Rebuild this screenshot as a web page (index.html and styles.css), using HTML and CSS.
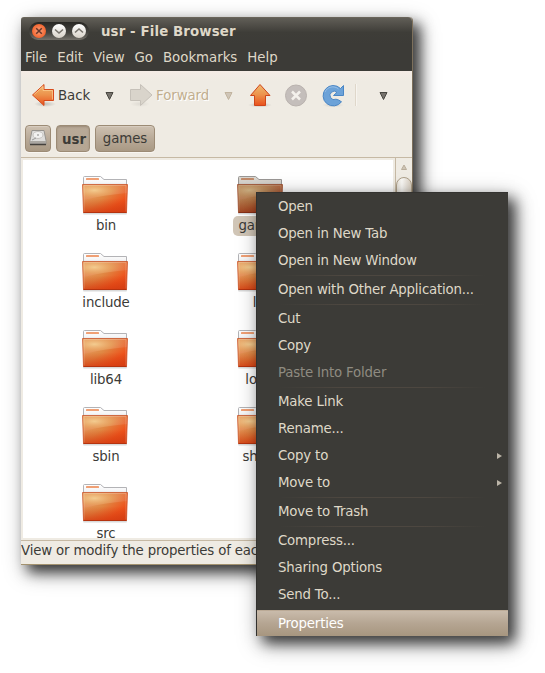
FILE: index.html
```
<!DOCTYPE html>
<html lang="en">
<head>
<meta charset="utf-8">
<title>usr - File Browser</title>
<link rel="stylesheet" href="styles.css">
</head>
<body>
<svg class="defs" aria-hidden="true">
  <defs>
    <linearGradient id="orange" x1="0" y1="0" x2="0" y2="1"><stop offset="0" stop-color="#f0ba70"/><stop offset=".5" stop-color="#ec914b"/><stop offset="1" stop-color="#e9501c"/></linearGradient>
    <linearGradient id="body" x1="0" y1="0" x2="1" y2=".8"><stop offset="0" stop-color="#e8a36c"/><stop offset=".5" stop-color="#e08844"/><stop offset=".82" stop-color="#ed531c"/><stop offset="1" stop-color="#e04818"/></linearGradient>
    <linearGradient id="foot" x1="0" y1="0" x2="0" y2="1"><stop offset=".5" stop-color="#d34010" stop-opacity="0"/><stop offset="1" stop-color="#d33a10" stop-opacity=".75"/></linearGradient>
    <radialGradient id="glow" cx=".26" cy=".35" r=".7"><stop offset="0" stop-color="#f3cc90"/><stop offset=".55" stop-color="#eaa868" stop-opacity=".7"/><stop offset="1" stop-color="#ec8560" stop-opacity=".35"/></radialGradient>
    <linearGradient id="paper" x1="0" y1="0" x2="0" y2="1"><stop offset="0" stop-color="#fff"/><stop offset=".6" stop-color="#f5f5f6"/><stop offset="1" stop-color="#c9c9cd"/></linearGradient>
    <radialGradient id="shade"><stop offset="0" stop-color="#000" stop-opacity=".2"/><stop offset="1" stop-color="#000" stop-opacity="0"/></radialGradient>
    <symbol id="folder" viewBox="0 0 48 40">
      <rect x="2" y="36.500" width="44" height="2" rx="1" fill="#000" opacity=".15"/>
      <path d="M2.500 11V1.500Q2.500.5 3.500.5H19.500l3.500 3H45.500V11z" fill="url(#paper)" stroke="#b3b3b6"/>
      <rect x="5" y="2" width="13" height="2" rx=".6" fill="#f0a075"/>
      <path d="M1.500 8.500H46.500L45.500 36.500H2.500z" fill="url(#body)"/>
      <path d="M1.500 8.500H46.500L45.500 36.500H2.500z" fill="url(#foot)"/>
      <path d="M2 9H46V17Q23 19 2.400 24z" fill="url(#glow)"/>
      <path d="M3 35.500V9.500H45V35.500" fill="none" stroke="#fff" stroke-opacity=".2"/>
      <path d="M1.500 8.500H46.500L45.500 36.500H2.500z" fill="none" stroke="#c8481c" stroke-opacity=".7"/>
      <path d="M2.500 36.500H45.500" stroke="#b5330f"/>
    </symbol>
  </defs>
</svg>

<main class="window">
  <header class="titlebar">
    <div class="controls">
      <svg width="60" height="18" viewBox="0 0 60 18">
        <defs><linearGradient id="wb" x1="0" y1="0" x2="0" y2="1"><stop offset="0" stop-color="#fff"/><stop offset="1" stop-color="#d8d2c8"/></linearGradient><radialGradient id="cb"><stop offset="0" stop-color="#f9a27c"/><stop offset="1" stop-color="#f3642e"/></radialGradient></defs>
        <circle cx="10" cy="9" r="7" fill="url(#cb)"/><circle cx="30" cy="9" r="7" fill="url(#wb)"/><circle cx="50" cy="9" r="7" fill="url(#wb)"/>
        <path d="M7.200 6.200l5.600 5.600m0-5.600l-5.600 5.600" stroke="#653629" stroke-width="1.500"/>
        <path d="M26 7.500l4 3.500 4-3.500M46 10.500l4-3.500 4 3.500" fill="none" stroke="#77736c" stroke-width="1.600"/>
      </svg>
    </div>
    <h1>usr - File Browser</h1>
  </header>
  <nav class="menubar"><span>File</span><span>Edit</span><span>View</span><span>Go</span><span>Bookmarks</span><span>Help</span></nav>

  <section class="toolbar">
    <svg width="391" height="49" viewBox="0 1 391 49">
      <ellipse cx="24" cy="34" rx="11" ry="3" fill="url(#shade)"/>
      <path d="M11.500 25L23 14.500v5h9.500v11H23v5z" fill="url(#orange)" stroke="#d84a1b" stroke-linejoin="round"/>
      <path d="M13.200 24.500L22 16.500V20.500h9.500v9" fill="none" stroke="#ffd49a" stroke-opacity=".65"/>
      <path d="M85 22.500H92L88.500 29.500z" fill="#77736d" stroke="#494741"/>
      <ellipse cx="119" cy="34" rx="10" ry="3" fill="url(#shade)" opacity=".35"/>
      <path d="M131 25L119.500 14.500v5h-10v11h10v5z" fill="#d9d4cb" stroke="#c6c1b9" stroke-linejoin="round"/>
      <path d="M204 22.500H211L207.500 29.500z" fill="#cfc5b7" stroke="#c2b49f"/>
      <ellipse cx="239" cy="35" rx="12" ry="2.500" fill="url(#shade)"/>
      <path d="M239 14.500L249 25.500H244.500V35.500H233.500V25.500H229.500z" fill="url(#orange)" stroke="#cf451a" stroke-linejoin="round"/>
      <circle cx="275" cy="25.500" r="10.500" fill="#c4bebb" stroke="#b9b2ae"/>
      <path d="M271 21.500l8 8m0-8l-8 8" stroke="#f4f1ec" stroke-width="2.500"/>
      <ellipse cx="312" cy="35" rx="11" ry="2.500" fill="url(#shade)" opacity=".6"/>
      <path d="M322.500 15.500V25.500H312.500L316 22.300A4.200 4.200 0 1 0 315 29.200Q317.500 29.500 320.500 31.800A10.200 10.200 0 1 1 319.500 18.500z" fill="#6ca2d8" stroke="#4a86c5"/>
      <path d="M304 22a8.500 8.500 0 0 1 13.500-3" fill="none" stroke="#a8caed" stroke-opacity=".7"/>
      <path d="M334.500 14v22" stroke="#dfd7ca"/><path d="M335.500 14v22" stroke="#f7f4ef"/>
      <path d="M359 22.500H366L362.500 29.500z" fill="#77736d" stroke="#494741"/>
    </svg>
    <span class="back">Back</span><span class="forward">Forward</span>
  </section>

  <section class="pathbar">
    <button class="crumb disk" aria-label="File System">
      <svg width="18" height="18" viewBox="0 0 18 18"><path d="M3 1.500h12l2 10v4H1v-4z" fill="#dedddb" stroke="#96938e"/><ellipse cx="9" cy="6" rx="5" ry="3.500" fill="#f1f1f0" stroke="#c4c2bf"/><circle cx="9" cy="6" r="1" fill="#aaa"/><path d="M3 11l4-2" stroke="#999"/><path d="M1 12h16v3H1z" fill="#aaa7a2"/><path d="M1 15.500h16" stroke="#44413d" stroke-width="1.500"/></svg>
    </button>
    <button class="crumb current">usr</button>
    <button class="crumb games">games</button>
  </section>

  <section class="view">
    <div class="files">
      <div class="file"><svg><use href="#folder"/></svg><span>bin</span></div>
      <div class="file selected"><svg><use href="#folder"/></svg><span>games</span></div>
      <div class="file"><svg><use href="#folder"/></svg><span>include</span></div>
      <div class="file"><svg><use href="#folder"/></svg><span>lib</span></div>
      <div class="file"><svg><use href="#folder"/></svg><span>lib64</span></div>
      <div class="file"><svg><use href="#folder"/></svg><span>local</span></div>
      <div class="file"><svg><use href="#folder"/></svg><span>sbin</span></div>
      <div class="file"><svg><use href="#folder"/></svg><span>share</span></div>
      <div class="file"><svg><use href="#folder"/></svg><span>src</span></div>
    </div>
    <div class="scrollbar"><svg width="16" height="19" viewBox="0 0 16 19"><path d="M5.500 11.500h5L8 7z" fill="#cfc5b6" stroke="#b9ad9a"/></svg><div class="thumb"></div></div>
  </section>
  <footer class="status">View or modify the properties of each</footer>
</main>

<div class="menu">
  <div class="item">Open</div>
  <div class="item">Open in New Tab</div>
  <div class="item">Open in New Window</div>
  <div class="sep"></div>
  <div class="item">Open with Other Application...</div>
  <div class="sep"></div>
  <div class="item">Cut</div>
  <div class="item">Copy</div>
  <div class="item disabled">Paste Into Folder</div>
  <div class="sep"></div>
  <div class="item">Make Link</div>
  <div class="item">Rename...</div>
  <div class="item">Copy to<i class="arrow"></i></div>
  <div class="item">Move to<i class="arrow"></i></div>
  <div class="sep"></div>
  <div class="item">Move to Trash</div>
  <div class="sep"></div>
  <div class="item">Compress...</div>
  <div class="item">Sharing Options</div>
  <div class="item">Send To...</div>
  <div class="item active">Properties</div>
</div>
</body>
</html>
```
FILE: styles.css
```
* { box-sizing: border-box; }
body {
  margin: 0;
  width: 545px;
  height: 673px;
  overflow: hidden;
  position: relative;
  background: #fff;
  color: #3c3b37;
  font: 13.333px/16px "DejaVu Sans", sans-serif;
}
.defs { position: absolute; width: 0; height: 0; }
.window {
  display: flex;
  flex-direction: column;
  width: 392px;
  height: 548px;
  margin: 17px 0 0 21px;
  background: #efebe3;
  border-right: 1px solid #7d705c;
  border-bottom: 1px solid #a3926f;
  border-radius: 3px 4px 0 0;
  box-shadow: 7px 7px 13px rgba(0,0,0,.68), 5px 7px 22px rgba(0,0,0,.38);
}
.titlebar {
  display: flex;
  align-items: center;
  height: 27px;
  padding-left: 8px;
  background: linear-gradient(#615e57, #3e3d38 55%, #3c3b37);
  border-top: 1px solid #6a655b;
  border-radius: 3px 4px 0 0;
  color: #dfd8c8;
}
.controls {
  width: 60px;
  height: 18px;
  border-radius: 9px;
  background: linear-gradient(#292824, #45443f 60%, #74716a);
}
.controls svg { display: block; }
h1 { margin: 1px 0 0 12px; font-size: 13.333px; line-height: 16px; letter-spacing: .12px; }
.menubar {
  display: flex;
  gap: 10px;
  height: 27px;
  padding: 6px 0 0 4px;
  background: #3c3b37;
  color: #dfd8c8;
  letter-spacing: -.02px;
}
.toolbar { position: relative; height: 50px; background: linear-gradient(#f5ece6, #efebe3 10px); }
.toolbar svg { display: block; }
.toolbar span { position: absolute; top: 17px; letter-spacing: -.06px; }
.back { left: 37px; }
.forward { left: 135px; color: #c1ae8e; text-shadow: 1px 1px #fff; }
.pathbar { display: flex; gap: 5px; height: 36px; padding: 4px 0 0 4px; }
.crumb {
  height: 27px;
  padding: 0;
  border: 1px solid #9c8b75;
  border-radius: 4px;
  background: linear-gradient(#cec1b1, #b9aa98 50%, #a99984);
  box-shadow: inset 0 1px rgba(255,255,255,.2), 0 1px #f9f6f1;
  color: #3c3b37;
  font: inherit;
}
.disk { display: grid; place-items: center; width: 26px; padding-bottom: 1px; }
.current { width: 34px; padding: 2px 0 0 2px; background: linear-gradient(#b8a997, #b5a693); box-shadow: inset 0 1px 2px #9b8b78, 0 1px #f9f6f1; font-weight: bold; }
.games { width: 60px; letter-spacing: -.1px; }
.view { display: flex; height: 384px; border-top: 1px solid #c6b9a4; border-bottom: 1px solid #c6b9a4; }
.files {
  display: grid;
  grid-template-columns: 154px 154px;
  grid-auto-rows: 77px;
  align-content: start;
  width: 374px;
  padding: 16px 0 0 6px;
  overflow: hidden;
  background: #fff;
  border: 2px solid #efebe3;
  box-shadow: 1px 0 #c6b9a4;
}
.file { display: flex; flex-direction: column; align-items: center; }
.file svg { width: 48px; height: 40px; flex: none; margin-right: 2px; }
.file span { padding: 1px 5px; border-radius: 5px; line-height: 18px; letter-spacing: -.14px; }
.file:nth-child(even) { padding-left: 1px; }
.selected svg { filter: brightness(.82) saturate(.9) sepia(.12); }
.selected span { background: #d1c6b7; }
.scrollbar { width: 16px; margin-left: auto; }
.scrollbar svg { display: block; }
.thumb { height: 150px; border: 1px solid #ad9f89; border-radius: 8px; background: linear-gradient(90deg, #e8e3da, #fbfaf7 35%, #d9cfc1); }
.status { padding-top: 2px; white-space: nowrap; overflow: hidden; height: 23px; letter-spacing: -.16px; }
.menu {
  position: absolute;
  left: 256px;
  top: 192px;
  display: flex;
  flex-direction: column;
  width: 252px;
  height: 444px;
  background: #3c3b37;
  border-top: 1px solid #343330;
  border-left: 1px solid #32312e;
  box-shadow: 7px 7px 13px rgba(0,0,0,.68), 5px 7px 22px rgba(0,0,0,.38);
  color: #dfd8c8;
  letter-spacing: -.19px;
}
.item { display: flex; justify-content: space-between; align-items: center; height: 27px; flex: none; padding: 1px 6px 0 21px; }
.sep { height: 2px; flex: none; margin: 0 22px; background: linear-gradient(90deg, transparent, #4d4740 30%, #4d4740 70%, transparent) 0 1px / 100% 1px no-repeat; }
.disabled { color: #8f8b81; }
.arrow { margin-bottom: 1px; border-left: 5px solid #bcb5a8; border-top: 3px solid transparent; border-bottom: 3px solid transparent; }
.active { height: 26px; margin-top: auto; color: #fff; background: linear-gradient(#c9bbab, #b5a592 50%, #a7967f); border-top: 1px solid #bbaa96; }
```
